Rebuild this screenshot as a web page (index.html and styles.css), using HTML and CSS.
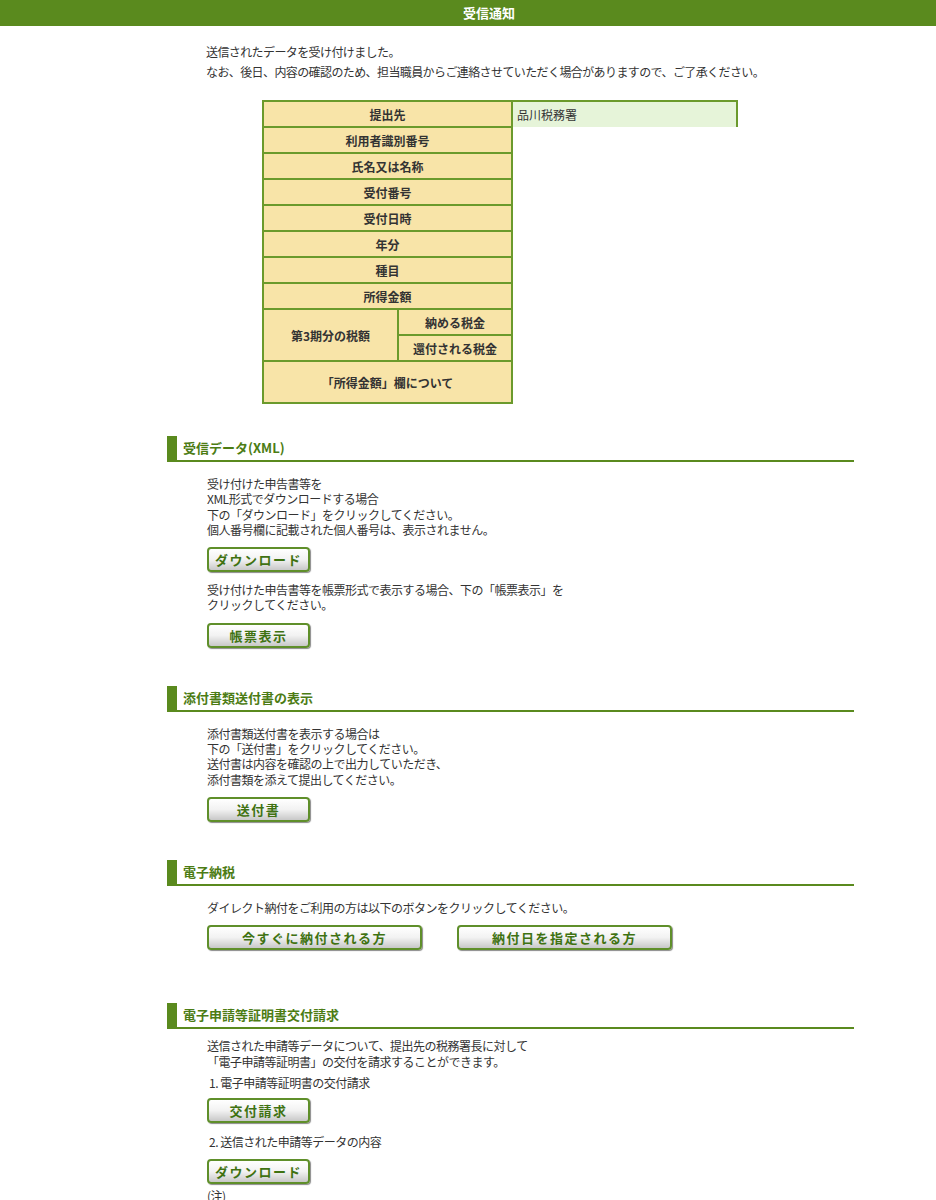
FILE: index.html
```html
<!DOCTYPE html>
<html lang="ja">
<head>
  <meta charset="utf-8">
  <title>受信通知</title>
  <link rel="stylesheet" href="styles.css">
</head>
<body>
  <div class="topbar">受信通知</div>

  <p class="intro">
    送信されたデータを受け付けました。<br>
    なお、後日、内容の確認のため、担当職員からご連絡させていただく場合がありますので、ご了承ください。
  </p>

  <table class="result">
    <colgroup>
      <col class="c1"><col class="c2"><col class="c3">
    </colgroup>
    <tr><th colspan="2">提出先</th><td class="val">品川税務署</td></tr>
    <tr><th colspan="2">利用者識別番号</th><td></td></tr>
    <tr><th colspan="2">氏名又は名称</th><td></td></tr>
    <tr><th colspan="2">受付番号</th><td></td></tr>
    <tr><th colspan="2">受付日時</th><td></td></tr>
    <tr><th colspan="2">年分</th><td></td></tr>
    <tr><th colspan="2">種目</th><td></td></tr>
    <tr><th colspan="2">所得金額</th><td></td></tr>
    <tr><th rowspan="2">第3期分の税額</th><th>納める税金</th><td></td></tr>
    <tr><th>還付される税金</th><td></td></tr>
    <tr class="tall"><th colspan="2">「所得金額」欄について</th><td></td></tr>
  </table>

  <div class="section s1">
    <h2>受信データ(XML)</h2>
    <div class="sec-body">
      <p>受け付けた申告書等を<br>XML形式でダウンロードする場合<br>下の「ダウンロード」をクリックしてください。<br>個人番号欄に記載された個人番号は、表示されません。</p>
      <button class="btn">ダウンロード</button>
      <p class="after-btn">受け付けた申告書等を帳票形式で表示する場合、下の「帳票表示」を<br>クリックしてください。</p>
      <button class="btn">帳票表示</button>
    </div>
  </div>

  <div class="section s2">
    <h2>添付書類送付書の表示</h2>
    <div class="sec-body">
      <p>添付書類送付書を表示する場合は<br>下の「送付書」をクリックしてください。<br>送付書は内容を確認の上で出力していただき、<br>添付書類を添えて提出してください。</p>
      <button class="btn">送付書</button>
    </div>
  </div>

  <div class="section s3">
    <h2>電子納税</h2>
    <div class="sec-body">
      <p>ダイレクト納付をご利用の方は以下のボタンをクリックしてください。</p>
      <div class="btn-row">
        <button class="btn wide">今すぐに納付される方</button>
        <button class="btn wide">納付日を指定される方</button>
      </div>
    </div>
  </div>

  <div class="section s4">
    <h2>電子申請等証明書交付請求</h2>
    <div class="sec-body">
      <p>送信された申請等データについて、提出先の税務署長に対して<br>「電子申請等証明書」の交付を請求することができます。</p>
      <p class="step">1. 電子申請等証明書の交付請求</p>
      <button class="btn tight">交付請求</button>
      <p class="step step2">2. 送信された申請等データの内容</p>
      <button class="btn">ダウンロード</button>
      <p class="note">(注)</p>
    </div>
  </div>
</body>
</html>
```

FILE: styles.css
```css
body {
  margin: 0;
  font-family: "Noto Sans CJK JP", "Noto Sans", sans-serif;
  font-size: 12px;
  color: #333;
  background-color: #fff;
}
p {
  margin: 0;
}
.topbar {
  height: 26px;
  line-height: 26px;
  padding-left: 42px;
  background-color: #5a8a1e;
  color: #fff;
  font-size: 13px;
  font-weight: bold;
  text-align: center;
}
.intro {
  margin: 16px 0 0 206px;
  line-height: 20px;
  letter-spacing: -0.6px;
}

/* result table */
.result {
  margin: 18px 0 0 262px;
  width: 474px;
  border-collapse: collapse;
  table-layout: fixed;
}
.result .c1 { width: 135px; }
.result .c2 { width: 114px; }
.result .c3 { width: 225px; }
.result th {
  height: 24px;
  padding: 0;
  background-color: #f8e4a8;
  border: 2px solid #6b9a2c;
  font-weight: bold;
  font-size: 12px;
  color: #333;
  text-align: center;
}
.result .tall th {
  height: 40px;
}
.result td {
  padding: 0;
}
.result td.val {
  padding-left: 4px;
  background-color: #e6f4d9;
  border-top: 2px solid #6b9a2c;
  border-right: 2px solid #6b9a2c;
  text-align: left;
}

/* sections */
.section {
  margin-left: 167px;
  width: 687px;
}
.s1 { margin-top: 32px; }
.s2 { margin-top: 38px; }
.s3 { margin-top: 38px; }
.s4 { margin-top: 53px; }
h2 {
  margin: 0;
  height: 24px;
  line-height: 24px;
  padding-left: 6px;
  border-left: 10px solid #5a8a1e;
  border-bottom: 2px solid #5a8a1e;
  color: #4c7c14;
  font-size: 13px;
  font-weight: bold;
}
.sec-body {
  padding-left: 40px;
  line-height: 15.3px;
  letter-spacing: -0.5px;
}
.sec-body p {
  margin-top: 14px;
}
.sec-body p.after-btn {
  margin-top: 10px;
}
.s4 .sec-body p {
  margin-top: 9px;
}
.s4 .sec-body p.step {
  margin-top: 6px;
  padding-left: 2px;
}
.s4 .sec-body p.step2 {
  margin-top: 11px;
}
.s4 .sec-body p.note {
  margin-top: 4px;
}
.btn {
  display: block;
  margin-top: 10px;
  width: 103px;
  height: 25px;
  padding: 0;
  border: 2px solid #5f8f2a;
  border-radius: 4px;
  background: linear-gradient(#ffffff, #f2f2f2 50%, #c8c8c8);
  box-shadow: 1px 1px 1px #8a8a8a;
  color: #3f7212;
  font-family: inherit;
  font-size: 13px;
  font-weight: bold;
  letter-spacing: 1.5px;
}
.btn.tight {
  margin-top: 8px;
}
.btn-row {
  display: flex;
  gap: 35px;
  margin-top: 10px;
}
.btn-row .btn {
  margin-top: 0;
}
.btn.wide {
  width: 215px;
}
```
